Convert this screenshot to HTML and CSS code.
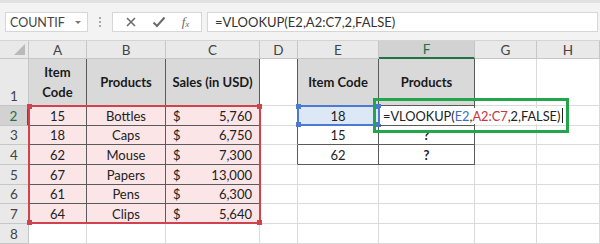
FILE: index.html
```html
<!doctype html>
<html lang="en">
<head>
  <meta charset="utf-8">
  <title>VLOOKUP</title>
  <link rel="stylesheet" href="styles.css">
</head>
<body>

  <div class="bar">
    <div class="namebox">COUNTIF<span class="caret"></span></div>
    <div class="grip"></div>
    <div class="fxbtns">
      <svg width="12" height="12" viewBox="0 0 12 12"><path d="M2 2 L10 10 M10 2 L2 10" stroke="#6b6b6b" stroke-width="1.6" fill="none"/></svg>
      <svg width="14" height="12" viewBox="0 0 14 12"><path d="M1.5 6.5 L5 10 L12.5 1.5" stroke="#6b6b6b" stroke-width="2" fill="none"/></svg>
      <span class="fx">f<sub>x</sub></span>
    </div>
    <div class="formula">=VLOOKUP(E2,A2:C7,2,FALSE)</div>
  </div>

  <div class="sheet">
    <!-- column headers -->
    <div class="corner"><span class="tri"></span></div>
    <div class="ch">A</div>
    <div class="ch">B</div>
    <div class="ch">C</div>
    <div class="ch">D</div>
    <div class="ch">E</div>
    <div class="ch sel">F</div>
    <div class="ch">G</div>
    <div class="ch">H</div>

    <!-- row 1 -->
    <div class="rh">1</div>
    <div class="c hd dk">Item<br>Code</div>
    <div class="c hd dk">Products</div>
    <div class="c hd dk">Sales (in USD)</div>
    <div class="c edge"></div>
    <div class="c hd dk">Item Code</div>
    <div class="c hd dk">Products</div>
    <div class="c"></div>
    <div class="c"></div>

    <!-- row 2 -->
    <div class="rh sel">2</div>
    <div class="c pk dk ctr">15</div>
    <div class="c pk dk ctr">Bottles</div>
    <div class="c pk dk money"><span>$</span><span>5,760</span></div>
    <div class="c edge"></div>
    <div class="c dk ctr blue">18</div>
    <div class="c dk editing"><span class="typed">=VLOOKUP(<b class="ref-e">E2</b>,<b class="ref-a">A2:C7</b>,2,FALSE)<i class="cursor"></i></span></div>
    <div class="c"></div>
    <div class="c"></div>

    <!-- row 3 -->
    <div class="rh">3</div>
    <div class="c pk dk ctr">18</div>
    <div class="c pk dk ctr">Caps</div>
    <div class="c pk dk money"><span>$</span><span>6,750</span></div>
    <div class="c edge"></div>
    <div class="c dk ctr">15</div>
    <div class="c dk ctr q">?</div>
    <div class="c"></div>
    <div class="c"></div>

    <!-- row 4 -->
    <div class="rh">4</div>
    <div class="c pk dk ctr">62</div>
    <div class="c pk dk ctr">Mouse</div>
    <div class="c pk dk money"><span>$</span><span>7,300</span></div>
    <div class="c edge"></div>
    <div class="c dk ctr">62</div>
    <div class="c dk ctr q">?</div>
    <div class="c"></div>
    <div class="c"></div>

    <!-- row 5 -->
    <div class="rh">5</div>
    <div class="c pk dk ctr">67</div>
    <div class="c pk dk ctr">Papers</div>
    <div class="c pk dk money"><span>$</span><span>13,000</span></div>
    <div class="c"></div>
    <div class="c"></div>
    <div class="c"></div>
    <div class="c"></div>
    <div class="c"></div>

    <!-- row 6 -->
    <div class="rh">6</div>
    <div class="c pk dk ctr">61</div>
    <div class="c pk dk ctr">Pens</div>
    <div class="c pk dk money"><span>$</span><span>6,300</span></div>
    <div class="c"></div>
    <div class="c"></div>
    <div class="c"></div>
    <div class="c"></div>
    <div class="c"></div>

    <!-- row 7 -->
    <div class="rh">7</div>
    <div class="c pk dk ctr">64</div>
    <div class="c pk dk ctr">Clips</div>
    <div class="c pk dk money"><span>$</span><span>5,640</span></div>
    <div class="c"></div>
    <div class="c"></div>
    <div class="c"></div>
    <div class="c"></div>
    <div class="c"></div>

    <!-- row 8 -->
    <div class="rh">8</div>
    <div class="c"></div>
    <div class="c"></div>
    <div class="c"></div>
    <div class="c"></div>
    <div class="c"></div>
    <div class="c"></div>
    <div class="c"></div>
    <div class="c"></div>

    <!-- range highlights drawn over the grid -->
    <div class="marquee"><i class="h tl"></i><i class="h tr"></i><i class="h bl"></i><i class="h br"></i></div>
    <div class="bluebox"><i class="h tl"></i><i class="h tr"></i><i class="h bl"></i><i class="h br"></i></div>
    <div class="greenbox"></div>
  </div>

</body>
</html>
```

FILE: styles.css
```css
body {
    margin:0;
    background:#fff;
    font-family:Lato, "Liberation Sans", sans-serif;
    color:#222;
    width:600px;
    height:244px;
    overflow:hidden;
}

/* formula bar */
.bar {
    height:41px;
    box-sizing:border-box;
    border-top:3px solid #e1e1e1;
    border-bottom:1px solid #d4d4d4;
    background:#f3f3f3;
    display:flex;
    align-items:flex-start;
    padding:9px 2px 0 5px;
}
.namebox {
    width:83px;
    height:20px;
    box-sizing:border-box;
    background:#fff;
    border:1px solid #d6d6d6;
    font-size:12.5px;
    color:#444;
    display:flex;
    align-items:center;
    justify-content:space-between;
    padding:0 6px 0 4px;
}
.caret {
    width:0;
    height:0;
    border-left:3px solid transparent;
    border-right:3px solid transparent;
    border-top:3px solid #777;
}
.grip {
    width:2px;
    height:10px;
    margin:5px 11px 0 11px;
    background:repeating-linear-gradient(#aaa 0 2px, transparent 2px 4px);
}
.fxbtns {
    width:90px;
    height:20px;
    box-sizing:border-box;
    background:#fff;
    border:1px solid #d6d6d6;
    display:flex;
    align-items:center;
    justify-content:space-around;
    padding:0 4px;
}
.fx {
    font-family:"Liberation Serif", serif;
    font-style:italic;
    font-size:13px;
    color:#6b6b6b;
}
.fx sub {
    font-size:9px;
    vertical-align:-1px;
}
.formula {
    flex:1;
    margin-left:5px;
    height:20px;
    box-sizing:border-box;
    background:#fff;
    border:1px solid #d6d6d6;
    font-size:13px;
    color:#333;
    display:flex;
    align-items:center;
    padding-left:7px;
}

/* grid */
.sheet {
    position:relative;
    display:grid;
    grid-template-columns:29px 58px 79px 94px 38px 81px 96px 62px 63px;
    grid-template-rows:18px 47px;
    grid-auto-rows:19.7px;
}
.sheet > div {
    box-sizing:border-box;
}
.corner, .ch, .rh {
    background:#e9e9e9;
    color:#444;
    font-size:13.5px;
    border-right:1px solid #c6c6c6;
    border-bottom:1px solid #c6c6c6;
}
.corner {
    position:relative;
}
.tri {
    position:absolute;
    right:3px;
    bottom:3px;
    width:0;
    height:0;
    border-left:11px solid transparent;
    border-bottom:11px solid #b9b9b9;
}
.ch {
    display:flex;
    align-items:center;
    justify-content:center;
}
.ch.sel {
    background:#d2d2d2;
    color:#217346;
    border-bottom:2px solid #217346;
}
.rh {
    display:flex;
    align-items:flex-end;
    justify-content:center;
    padding-bottom:1px;
}
.rh.sel {
    background:#d2d2d2;
    color:#217346;
    border-right:2px solid #217346;
}
.c {
    border-right:1px solid #dadada;
    border-bottom:1px solid #dadada;
    font-size:13px;
    display:flex;
    align-items:flex-end;
    padding-bottom:1px;
    white-space:nowrap;
}
.c.dk {
    border-right-color:#5a5a5a;
    border-bottom-color:#5a5a5a;
}
.c.edge {
    border-right-color:#5a5a5a;
}
.hd {
    background:#d9d9d9;
    font-weight:bold;
    font-size:13px;
    color:#1a1a1a;
    justify-content:center;
    align-items:center;
    text-align:center;
    white-space:normal;
    line-height:20px;
    padding:0;
}
.pk {
    background:#fbe5e6;
}
.ctr {
    justify-content:center;
}
.money {
    justify-content:space-between;
    padding:0 7px 1px 7px;
}
.q {
    font-weight:bold;
}
.blue {
    background:#dde8f6;
}
.editing {
    overflow:visible;
    position:relative;
    z-index:1;
}
.typed {
    background:#fff;
    padding:0 2px 0 3px;
    margin-left:1px;
    font-size:12.8px;
    color:#222;
    display:flex;
    align-items:center;
}
.typed b {
    font-weight:normal;
}
.ref-e {
    color:#3b6fc4;
}
.ref-a {
    color:#c8323c;
}
.cursor {
    display:inline-block;
    width:1px;
    height:15px;
    margin-left:2px;
    background:#222;
}

/* range highlights */
.marquee, .bluebox, .greenbox {
    position:absolute;
    box-sizing:border-box;
    pointer-events:none;
}
.marquee {
    left:28px;
    top:64px;
    width:233px;
    height:119px;
    border:2px solid #d0434c;
}
.bluebox {
    left:297px;
    top:64px;
    width:83px;
    height:21px;
    border:2px solid #4b7bd0;
}
.greenbox {
    left:373px;
    top:57px;
    width:196px;
    height:35px;
    border:3px solid #22a64a;
    z-index:2;
}
.h {
    position:absolute;
    width:5px;
    height:5px;
}
.marquee .h { background:#d0434c; }
.bluebox .h { background:#4b7bd0; }
.tl { left:-3px; top:-3px; }
.tr { right:-3px; top:-3px; }
.bl { left:-3px; bottom:-3px; }
.br { right:-3px; bottom:-3px; }
```
